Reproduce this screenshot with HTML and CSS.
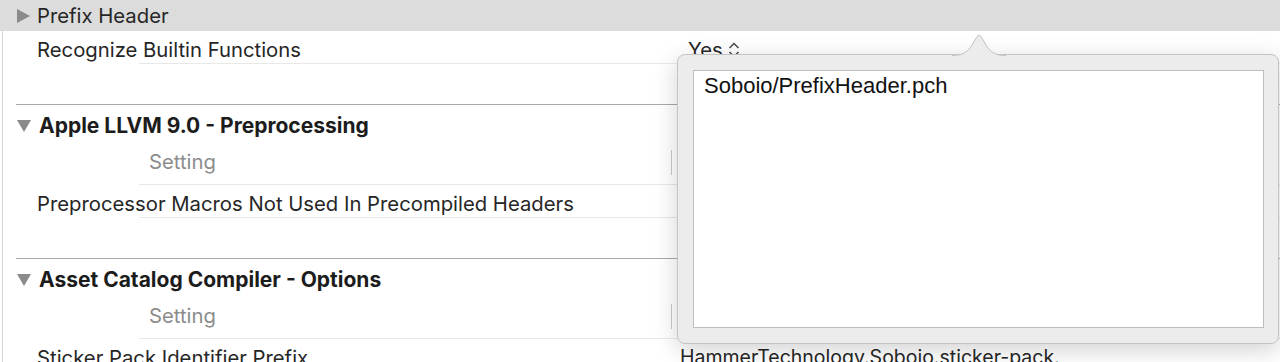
FILE: index.html
```html
<!DOCTYPE html>
<html lang="en">

<head>
    <meta charset="UTF-8">
    <meta name="viewport" content="width=device-width, initial-scale=1.0">
    <title>Build Settings</title>
    <link rel="stylesheet" href="styles.css">
</head>

<body>
    <div class="editor">
        <div class="group-header">
            <span class="disclosure closed"></span>
            <span>Prefix Header</span>
        </div>

        <div class="content">
            <div class="row">
                <div class="label">Recognize Builtin Functions</div>
                <div class="value">Yes
                    <svg class="stepper" width="14" height="20" viewBox="0 0 14 20">
                        <path d="M2.5 8 L7 3.5 L11.5 8 M2.5 12 L7 16.5 L11.5 12" fill="none" stroke="#4a4a4a" stroke-width="1.5" />
                    </svg>
                </div>
            </div>
            <div class="spacer"></div>

            <div class="section">
                <div class="section-title">
                    <span class="disclosure open"></span>
                    <span>Apple LLVM 9.0 - Preprocessing</span>
                </div>
                <div class="row head">
                    <div class="setting">Setting</div>
                    <div class="col-sep"></div>
                </div>
                <div class="row">
                    <div class="label">Preprocessor Macros Not Used In Precompiled Headers</div>
                </div>
            </div>
            <div class="spacer"></div>

            <div class="section">
                <div class="section-title">
                    <span class="disclosure open"></span>
                    <span>Asset Catalog Compiler - Options</span>
                </div>
                <div class="row head">
                    <div class="setting">Setting</div>
                    <div class="col-sep"></div>
                </div>
                <div class="row">
                    <div class="label">Sticker Pack Identifier Prefix</div>
                    <div class="value plain">HammerTechnology.Soboio.sticker-pack.</div>
                </div>
            </div>
        </div>
    </div>

    <!-- edit popover for Prefix Header -->
    <div class="popover">
        <svg class="arrow" width="54" height="24" viewBox="0 0 54 24">
            <path d="M0 23.5 C10 23.5 15 21 20 13 L25 4.5 Q27 1.5 29 4.5 L34 13 C39 21 44 23.5 54 23.5 Z" fill="#ececec" />
            <path d="M0 23.5 C10 23.5 15 21 20 13 L25 4.5 Q27 1.5 29 4.5 L34 13 C39 21 44 23.5 54 23.5" fill="none" stroke="#c2c2c2" stroke-width="1" />
        </svg>
        <div class="field">Soboio/PrefixHeader.pch</div>
    </div>
</body>

</html>
```

FILE: styles.css
```css
* {
    box-sizing: border-box;
}

body {
    margin: 0;
    background-color: #ffffff;
    font-family: Inter, "Helvetica Neue", "Liberation Sans", sans-serif;
    font-size: 20.3px;
    color: #262626;
    overflow: hidden;
}

.editor {
    width: 100%;
    height: 362px;
    overflow: hidden;
}

.group-header {
    height: 31px;
    padding-left: 17px;
    display: flex;
    align-items: center;
    gap: 7px;
    background-color: #dcdcdc;
}

.content {
    background: linear-gradient(#d6d6d6, #d6d6d6) 2px 0 / 1px 100% no-repeat;
}

.disclosure {
    width: 0;
    height: 0;
    flex: none;
}

.disclosure.closed {
    border-top: 7.5px solid transparent;
    border-bottom: 7.5px solid transparent;
    border-left: 13px solid #8a8a8a;
}

.disclosure.open {
    border-left: 7px solid transparent;
    border-right: 7px solid transparent;
    border-top: 12px solid #8a8a8a;
}

.row {
    height: 33px;
    display: flex;
    align-items: center;
    padding-top: 3px;
    background: linear-gradient(#e8e8e8, #e8e8e8) 139px 100% / calc(100% - 139px) 1px no-repeat;
}

.label {
    width: 680px;
    padding-left: 37px;
    white-space: nowrap;
}

.value {
    padding-left: 8px;
    display: flex;
    align-items: center;
    gap: 4px;
}

.value.plain {
    padding-left: 0;
    font-size: 19.5px;
    white-space: nowrap;
}

.stepper {
    margin-top: 1px;
}

.spacer {
    height: 40px;
}

.section {
    border-top: 1px solid #a9a9a9;
    margin-left: 16px;
}

.section .row {
    margin-left: -16px;
}

.section-title {
    height: 40px;
    display: flex;
    align-items: center;
    gap: 8px;
    padding-left: 1px;
    padding-top: 1px;
    font-size: 21px;
    font-weight: 700;
    color: #1c1c1c;
}

.row.head {
    height: 40px;
    padding-top: 0;
    padding-bottom: 7px;
    padding-left: 149px;
}

.setting {
    width: 522px;
    color: #8c8c8c;
}

.col-sep {
    width: 1px;
    height: 25px;
    margin-top: 2px;
    background-color: #c9c9c9;
}

.popover {
    position: absolute;
    left: 677px;
    top: 54px;
    width: 602px;
    height: 290px;
    padding: 15px 14px 15px 15px;
    background-color: #ececec;
    border: 1px solid #c4c4c4;
    border-radius: 8px;
    box-shadow: 0 6px 24px rgba(0, 0, 0, 0.18);
}

.arrow {
    position: absolute;
    left: 274px;
    top: -23px;
}

.field {
    height: 100%;
    padding: 2px 10px;
    background-color: #ffffff;
    border: 1px solid #bdbdbd;
    font-family: "Liberation Sans", Arial, sans-serif;
    font-size: 22px;
    color: #111111;
}
```
